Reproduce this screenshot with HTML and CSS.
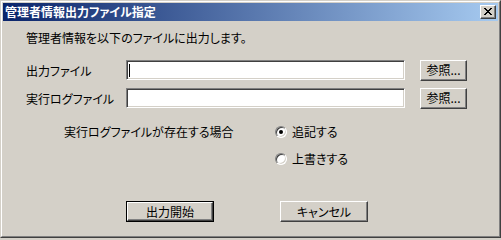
FILE: index.html
```html
<!DOCTYPE html>
<html lang="ja">
<head>
<meta charset="utf-8">
<title>管理者情報出力ファイル指定</title>
<link rel="stylesheet" href="styles.css">
</head>
<body>
<div class="window">
  <div class="window-inner">
    <div class="titlebar">
      <span class="title">管理者情報出力ファイル指定</span>
      <span class="close-btn">
        <svg width="8" height="7" viewBox="0 0 8 7"><path d="M0 0h2v1h-2zM1 1h2v1h-2zM6 0h2v1h-2zM5 1h2v1h-2zM2 2h4v1h-4zM3 3h2v1h-2zM2 4h4v1h-4zM1 5h2v1h-2zM5 5h2v1h-2zM0 6h2v1h-2zM6 6h2v1h-2z" fill="#000"/></svg>
      </span>
    </div>
    <div class="content">
      <div class="message">管理者情報を以下のファイルに出力します。</div>
      <div class="file-row">
        <span class="label">出力ファイル</span>
        <span class="field"><span class="caret"></span></span>
        <span class="btn small">参照...</span>
      </div>
      <div class="file-row">
        <span class="label">実行ログファイル</span>
        <span class="field"></span>
        <span class="btn small">参照...</span>
      </div>
      <div class="options">
        <span class="opt-label">実行ログファイルが存在する場合</span>
        <span class="option"><span class="radio checked"></span>追記する</span>
        <span></span>
        <span class="option"><span class="radio"></span>上書きする</span>
      </div>
      <div class="actions">
        <span class="btn wide default"><span class="btn-face">出力開始</span></span>
        <span class="btn wide">キャンセル</span>
      </div>
    </div>
  </div>
</div>
</body>
</html>
```
FILE: styles.css
```css
html, body {
  margin: 0;
  padding: 0;
  background: #d4d0c8;
}
body {
  font-family: "Noto Sans CJK JP", "Noto Sans", sans-serif;
  font-size: 12px;
  color: #000;
  font-feature-settings: "palt";
}
.window {
  width: 501px;
  height: 238px;
  box-sizing: border-box;
  border: 1px solid;
  border-color: #d4d0c8 #404040 #404040 #d4d0c8;
}
.window-inner {
  height: 100%;
  box-sizing: border-box;
  border: 1px solid;
  border-color: #fff #808080 #808080 #fff;
  padding: 1px;
}
.titlebar {
  height: 18px;
  background: linear-gradient(to right, #0a246a, #a6caf0);
  display: flex;
  align-items: center;
  justify-content: space-between;
  padding: 0 2px 0 2px;
}
.title {
  color: #fff;
  font-weight: bold;
  font-size: 12px;
  line-height: 18px;
  letter-spacing: 0;
}
.close-btn {
  width: 16px;
  height: 14px;
  box-sizing: border-box;
  background: #d4d0c8;
  border: 1px solid;
  border-color: #fff #404040 #404040 #fff;
  box-shadow: inset -1px -1px #808080;
  display: flex;
  align-items: center;
  justify-content: center;
}
.close-btn svg { display: block; margin: 0 1px 1px 0; }
.content {
  padding: 9px 0 0 23px;
}
.message {
  height: 16px;
  line-height: 16px;
  margin-bottom: 14px;
}
.file-row {
  display: flex;
  align-items: center;
  height: 21px;
  margin-bottom: 7px;
}
.label {
  width: 100px;
  line-height: 16px;
}
.field {
  width: 279px;
  height: 20px;
  box-sizing: border-box;
  background: #fff;
  border: 1px solid;
  border-color: #808080 #fff #fff #808080;
  box-shadow: inset 1px 1px #404040, inset -1px -1px #d4d0c8;
  display: flex;
  align-items: center;
  align-self: flex-start;
}
.caret {
  width: 1px;
  height: 13px;
  background: #000;
  margin-left: 2px;
}
.btn {
  box-sizing: border-box;
  background: #d4d0c8;
  border: 1px solid;
  border-color: #fff #404040 #404040 #fff;
  box-shadow: inset -1px -1px #808080;
  display: flex;
  align-items: center;
  justify-content: center;
  line-height: 16px;
}
.btn.small {
  width: 47px;
  height: 21px;
  margin-left: 15px;
  padding-bottom: 1px;
}
.options {
  display: grid;
  grid-template-columns: 211px auto;
  row-gap: 11px;
  margin: 15px 0 0 38px;
  align-items: center;
}
.opt-label, .option {
  height: 16px;
  line-height: 16px;
}
.option {
  display: flex;
  align-items: center;
}
.radio {
  width: 12px;
  height: 12px;
  box-sizing: border-box;
  border-radius: 50%;
  border: 1px solid;
  border-color: #808080 #fff #fff #808080;
  box-shadow: inset 1px 1px #404040, inset -1px -1px #d4d0c8;
  background: #fff;
  margin-right: 5px;
  display: flex;
  align-items: center;
  justify-content: center;
}
.radio.checked::after {
  content: "";
  width: 4px;
  height: 4px;
  border-radius: 50%;
  background: #000;
}
.actions {
  display: flex;
  gap: 66px;
  margin: 34px 0 0 100px;
}
.btn.wide {
  width: 88px;
  height: 21px;
}
.btn.default {
  border: 1px solid #000;
  box-shadow: none;
  padding: 0;
}
.btn-face {
  width: 100%;
  height: 100%;
  box-sizing: border-box;
  border: 1px solid;
  border-color: #fff #404040 #404040 #fff;
  box-shadow: inset -1px -1px #808080;
  display: flex;
  align-items: center;
  justify-content: center;
}
```
